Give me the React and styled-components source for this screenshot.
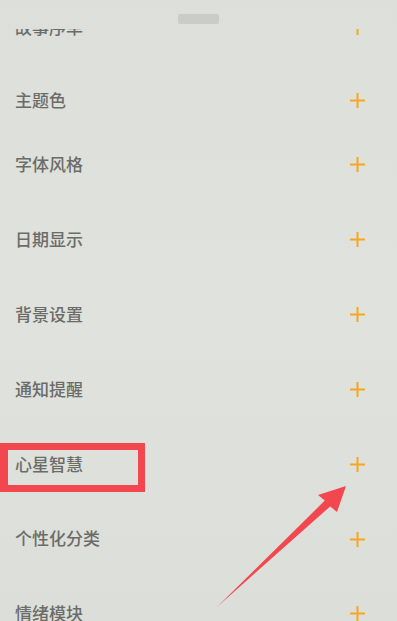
import React from "react";
import styled, { createGlobalStyle } from "styled-components";

const GlobalStyle = createGlobalStyle`
    html, body {
        margin: 0;
        padding: 0;
        background: #dee1db;
    }
    * {
        box-sizing: border-box;
    }
`;

const Sheet = styled.div`
    position: relative;
    width: 397px;
    height: 621px;
    overflow: hidden;
    display: flex;
    flex-direction: column;
    background: linear-gradient(180deg, #dde0da 0%, #e0e2dd 50%, #dcdfd9 100%);
    font-family: "Noto Sans CJK SC", "Noto Sans", sans-serif;
`;

const Header = styled.div`
    height: 29px;
    flex-shrink: 0;
    display: flex;
    justify-content: center;
    padding-top: 14px;
`;

const Handle = styled.div`
    width: 41px;
    height: 10px;
    border-radius: 2px;
    background: #c9ccc7;
`;

const Viewport = styled.div`
    flex: 1;
    overflow: hidden;
`;

const List = styled.div`
    margin-top: -49.5px;
    display: flex;
    flex-direction: column;
`;

const Row = styled.div`
    height: ${(p) => p.$h}px;
    flex-shrink: 0;
    display: flex;
    align-items: center;
    justify-content: space-between;
    padding: 0 31px 0 15px;
`;

const Label = styled.span`
    font-size: 17px;
    font-weight: 500;
    color: #6b6c6a;
    letter-spacing: 0;
`;

const Plus = styled.svg`
    width: 17px;
    height: 17px;
    display: block;
    margin-top: 3px;
`;

const Highlight = styled.div`
    position: absolute;
    left: 0;
    top: 443px;
    width: 145px;
    height: 49px;
    border: 7px solid #f2474f;
    border-left-width: 8px;
`;

const Overlay = styled.svg`
    position: absolute;
    left: 0;
    top: 0;
    pointer-events: none;
`;

const items = [
    { label: "故事序单", h: 93 },
    { label: "主题色", h: 53 },
    { label: "字体风格", h: 75 },
    { label: "日期显示", h: 75 },
    { label: "背景设置", h: 75 },
    { label: "通知提醒", h: 75 },
    { label: "心星智慧", h: 75 },
    { label: "个性化分类", h: 74 },
    { label: "情绪模块", h: 75 },
];

const PlusIcon = () => (
    <Plus viewBox="0 0 17 17">
        <path
            d="M8.5 1v15M1 8.5h15"
            stroke="#f6a623"
            strokeWidth="2"
            fill="none"
        />
    </Plus>
);

const App = () => {
    return (
        <>
            <GlobalStyle />
            <Sheet>
                <Header>
                    <Handle />
                </Header>
                <Viewport>
                    <List>
                        {items.map((item) => (
                            <Row key={item.label} $h={item.h}>
                                <Label>{item.label}</Label>
                                <PlusIcon />
                            </Row>
                        ))}
                    </List>
                </Viewport>
                <Highlight />
                <Overlay width="397" height="621" viewBox="0 0 397 621">
                    <polygon
                        points="217,607 219,605 324.8,500.6 318,495 346,486 337,512 330.2,506.4"
                        fill="#f2474f"
                    />
                </Overlay>
            </Sheet>
        </>
    );
};

export default App;
